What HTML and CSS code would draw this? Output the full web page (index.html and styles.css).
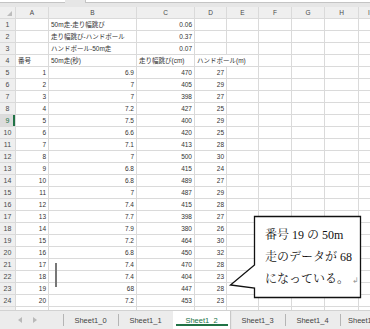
FILE: index.html
```html
<!DOCTYPE html>
<html lang="ja">
<head>
  <meta charset="UTF-8" />
  <meta name="viewport" content="width=device-width, initial-scale=1.0" />
  <title>Sheet1_2</title>
  <link rel="stylesheet" href="styles.css">
</head>
<body>
  <div class="topbar">
    <div class="box name-box"></div>
    <div class="box formula-box"></div>
  </div>

  <div class="sheet" id="sheet"></div>

  <div class="tabs">
    <div class="tab-nav">
      <svg width="4" height="6" viewBox="0 0 4 6"><polygon points="4,0 0,3 4,6" fill="#b9b9b9"/></svg>
      <svg width="4" height="6" viewBox="0 0 4 6"><polygon points="0,0 4,3 0,6" fill="#b9b9b9"/></svg>
    </div>
    <div class="tab">Sheet1_0</div>
    <div class="tab">Sheet1_1</div>
    <div class="tab active">Sheet1_2</div>
    <div class="tab">Sheet1_3</div>
    <div class="tab">Sheet1_4</div>
    <div class="tab last">Sheet1_5</div>
  </div>

  <div class="cursor"></div>

  <div class="callout">
    <svg class="callout-shape" width="136" height="86" viewBox="0 0 136 86">
      <path d="M26.5,1.5 H132.5 V82.5 H26.5 V73 L2.5,70 L26.5,50 Z" fill="#fff" stroke="#111" stroke-width="1.3"/>
    </svg>
    <div class="callout-text">
      <p>番号 19 の 50m</p>
      <p>走のデータが 68</p>
      <p>になっている。<span class="mark">↲</span></p>
    </div>
  </div>

  <script>
    const rows = [
      ['', '50m走-走り幅跳び', '0.06', ''],
      ['', '走り幅跳び-ハンドボール', '0.37', ''],
      ['', 'ハンドボール-50m走', '0.07', ''],
      ['番号', '50m走(秒)', '走り幅跳び(cm)', 'ハンドボール(m)'],
      ['1', '6.9', '470', '27'],
      ['2', '7', '405', '29'],
      ['3', '7', '398', '27'],
      ['4', '7.2', '427', '25'],
      ['5', '7.5', '400', '29'],
      ['6', '6.6', '420', '25'],
      ['7', '7.1', '413', '28'],
      ['8', '7', '500', '30'],
      ['9', '6.8', '415', '24'],
      ['10', '6.8', '489', '27'],
      ['11', '7', '487', '29'],
      ['12', '7.4', '415', '28'],
      ['13', '7.7', '398', '27'],
      ['14', '7.9', '380', '26'],
      ['15', '7.2', '464', '30'],
      ['16', '6.8', '450', '32'],
      ['17', '7.4', '470', '28'],
      ['18', '7.4', '404', '23'],
      ['19', '68', '447', '28'],
      ['20', '7.2', '453', '23'],
      ['', '', '', '']
    ];
    const letters = ['A', 'B', 'C', 'D', 'E', 'F', 'G', 'H', 'I'];
    const sheet = document.getElementById('sheet');

    function addCell(text, cls) {
      const el = document.createElement('div');
      el.className = 'cell ' + cls;
      el.textContent = text;
      sheet.appendChild(el);
      return el;
    }

    addCell('', 'head corner');
    letters.forEach(l => addCell(l, 'head'));

    rows.forEach((row, i) => {
      addCell(String(i + 1), i === 8 ? 'head row-head selected' : 'head row-head');
      let skip = false;
      for (let c = 0; c < letters.length; c++) {
        if (skip) { skip = false; continue; }
        const text = row[c] || '';
        const isNum = /^[\d.]+$/.test(text);
        let cls = isNum ? 'num' : 'txt';
        if (c === 3 && !isNum && text.length > 4) {
          cls += ' spill';
          skip = true;
        }
        addCell(text, cls);
      }
    });
  </script>
</body>
</html>
```

FILE: styles.css
```css
* {
  box-sizing: border-box;
}

body {
  margin: 0;
  width: 370px;
  height: 329px;
  overflow: hidden;
  position: relative;
  background: #fff;
  font-family: "Liberation Sans", "Noto Sans CJK JP", sans-serif;
}

.topbar {
  display: flex;
  height: 7px;
  background: #e6e6e6;
}

.topbar .box {
  height: 3px;
  background: #fff;
  border-bottom: 1px solid #c4c4c4;
}

.name-box {
  width: 65px;
  margin-right: 20px;
}

.formula-box {
  flex: 1;
  border-left: 1px solid #c4c4c4;
}

.sheet {
  display: grid;
  grid-template-columns: 15px 32px 87px 57px 31px 31px 32px 32px 33px 20px;
  grid-auto-rows: 11px;
  gap: 1px;
  height: 303px;
  width: 370px;
  overflow: hidden;
  background: #dadada;
}

.cell {
  background: #fff;
  color: #333;
  font-size: 6.5px;
  line-height: 11px;
  padding: 0 2px;
  white-space: nowrap;
  overflow: hidden;
}

.num {
  text-align: right;
}

.spill {
  grid-column: span 2;
}

.head {
  background: #efefef;
  color: #4a4a4a;
  text-align: center;
  padding: 0;
  font-size: 6.5px;
}

.row-head {
  font-size: 7px;
}

.row-head.selected {
  background: #dcdcdc;
  color: #217346;
  box-shadow: inset -2px 0 0 #217346;
}

.corner {
  position: relative;
}

.corner::after {
  content: '';
  position: absolute;
  right: 3px;
  bottom: 2px;
  border-left: 5px solid transparent;
  border-bottom: 5px solid #bcbcbc;
}

.tabs {
  display: flex;
  height: 19px;
  background: #ececec;
  border-top: 1px solid #d2d2d2;
  font-size: 7.5px;
  color: #444;
  overflow: hidden;
}

.tab-nav {
  width: 63px;
  flex-shrink: 0;
  display: flex;
  align-items: center;
  gap: 11px;
  padding-left: 18px;
}

.tab {
  width: 55px;
  flex-shrink: 0;
  display: flex;
  align-items: center;
  justify-content: center;
  position: relative;
}

.tab.last {
  justify-content: flex-start;
  padding-left: 8px;
}

.tab::before {
  content: '';
  position: absolute;
  left: 0;
  top: 3px;
  bottom: 3px;
  width: 1px;
  background: #b5b5b5;
}

.tab.active {
  width: 57px;
  background: #fff;
  color: #217346;
  box-shadow: 1px 0 1px rgba(0, 0, 0, 0.15);
}

.tab.active::before,
.tab.active + .tab::before {
  display: none;
}

.tab.active::after {
  content: '';
  position: absolute;
  left: 3px;
  right: 2px;
  bottom: 3px;
  height: 2px;
  background: #217346;
}

.cursor {
  position: absolute;
  left: 55px;
  top: 263px;
  width: 2px;
  height: 24px;
  background: #777;
}

.callout {
  position: absolute;
  left: 228px;
  top: 215px;
  width: 136px;
  height: 86px;
}

.callout-shape {
  position: absolute;
  left: 0;
  top: 0;
}

.callout-text {
  position: relative;
  padding: 9px 0 0 37px;
  font-family: "Liberation Serif", "Noto Serif CJK JP", "Noto Sans CJK JP", serif;
  font-size: 12px;
  line-height: 22px;
  color: #111;
}

.callout-text p {
  margin: 0;
  white-space: nowrap;
}

.mark {
  color: #999;
  font-size: 8px;
  margin-left: 3px;
}
```
